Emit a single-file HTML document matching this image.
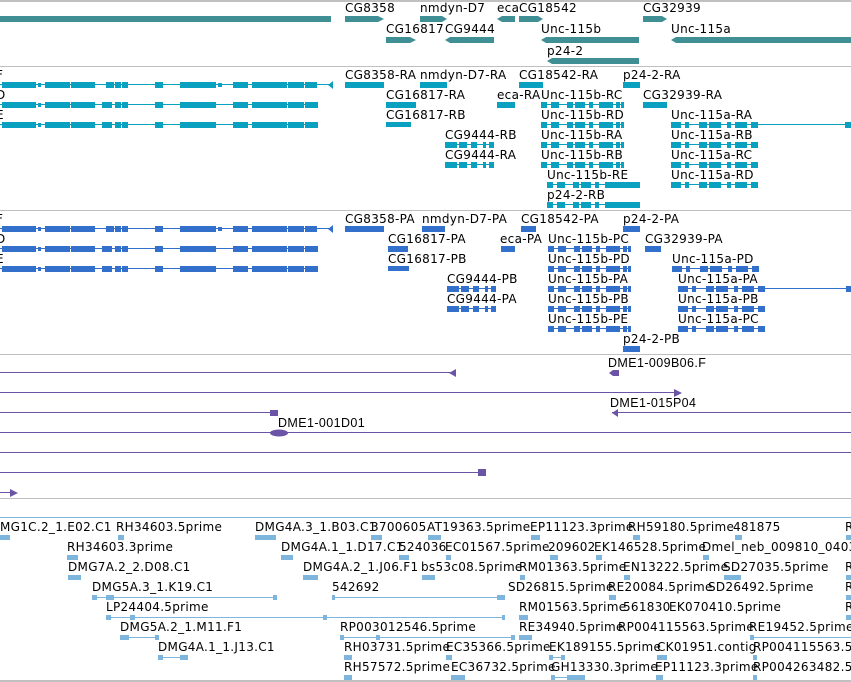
<!DOCTYPE html>
<html><head><meta charset="utf-8"><style>
html,body{margin:0;padding:0;background:#fff;width:851px;height:682px;overflow:hidden}
svg{display:block}
rect{shape-rendering:crispEdges}
text{font-family:"DejaVu Sans","Liberation Sans",sans-serif;font-size:12px;letter-spacing:0.3px;fill:#000}
.s text{font-family:"Liberation Sans","DejaVu Sans",sans-serif;font-size:12.5px;letter-spacing:0.4px}
</style></head><body>
<svg width="851" height="682" viewBox="0 0 851 682" xmlns="http://www.w3.org/2000/svg">
<defs>
<g id="lF"><rect x="0" y="-1" width="332" height="1"/>
<rect x="2" y="-3" width="34" height="6"/><rect x="38" y="-2" width="3" height="4"/><rect x="45" y="-3" width="25" height="6"/><rect x="71" y="-3" width="24" height="6"/><rect x="106" y="-3" width="8" height="6"/><rect x="115" y="-3" width="6" height="6"/><rect x="122" y="-3" width="6" height="6"/><rect x="155" y="-3" width="8" height="6"/><rect x="180" y="-3" width="36" height="6"/><rect x="218" y="-2" width="4" height="4"/><rect x="233" y="-3" width="15" height="6"/><rect x="252" y="-3" width="35" height="6"/><rect x="288" y="-3" width="16" height="6"/><rect x="305" y="-3" width="12" height="6"/><polygon points="328,0 333,-4 333,4"/></g>
<g id="lD"><rect x="0" y="-1" width="318" height="1"/>
<rect x="2" y="-3" width="34" height="6"/><rect x="38" y="-2" width="3" height="4"/><rect x="45" y="-3" width="25" height="6"/><rect x="71" y="-3" width="24" height="6"/><rect x="102" y="-3" width="10" height="6"/><rect x="115" y="-3" width="6" height="6"/><rect x="122" y="-3" width="6" height="6"/><rect x="155" y="-3" width="8" height="6"/><rect x="180" y="-3" width="36" height="6"/><rect x="233" y="-3" width="15" height="6"/><rect x="252" y="-3" width="35" height="6"/><rect x="288" y="-3" width="16" height="6"/><rect x="305" y="-3" width="13" height="6"/></g>
<g id="ub"><rect x="0" y="-1" width="83" height="1"/><rect x="0" y="-3" width="6" height="6"/><rect x="10" y="-3" width="8" height="6"/><rect x="26" y="-3" width="6" height="6"/><rect x="34" y="-3" width="10" height="6"/><rect x="48" y="-3" width="4" height="6"/><rect x="58" y="-3" width="14" height="6"/><rect x="75" y="-3" width="4" height="6"/><rect x="80" y="-3" width="3" height="6"/></g>
<g id="ua"><rect x="0" y="-1" width="87" height="1"/><rect x="0" y="-3" width="10" height="6"/><rect x="14" y="-3" width="4" height="6"/><rect x="28" y="-3" width="8" height="6"/><rect x="38" y="-3" width="12" height="6"/><rect x="56" y="-3" width="4" height="6"/><rect x="64" y="-3" width="12" height="6"/><rect x="80" y="-3" width="7" height="6"/></g>
<g id="c9"><rect x="0" y="-1" width="49" height="1"/><rect x="0" y="-3" width="12" height="6"/><rect x="14" y="-3" width="8" height="6"/><rect x="26" y="-3" width="6" height="6"/><rect x="38" y="-3" width="3" height="6"/><rect x="44" y="-3" width="5" height="6"/></g>
</defs>
<g fill="#c0c0c0"><rect x="0" y="0" width="851" height="2"/><rect x="0" y="66" width="851" height="1"/><rect x="0" y="210" width="851" height="1"/><rect x="0" y="354" width="851" height="1"/><rect x="0" y="498" width="851" height="1"/><rect x="0" y="680" width="851" height="2"/></g>

<g fill="#3f8f94">
<rect x="0" y="16" width="331" height="6"/>
<polygon points="345,16 378,16 384,19 378,22 345,22"/>
<polygon points="420,16 442,16 447,19 442,22 420,22"/>
<polygon points="497,19 502,16 515,16 515,22 502,22"/>
<polygon points="519,16 538,16 543,19 538,22 519,22"/>
<polygon points="643,16 662,16 667,19 662,22 643,22"/>
<polygon points="386,37 410,37 416,40 410,43 386,43"/>
<polygon points="445,40 450,37 494,37 494,43 450,43"/>
<polygon points="541,40 546,37 639,37 639,43 546,43"/>
<polygon points="671,40 676,37 851,37 851,43 676,43"/>
<polygon points="547,61 552,58 639,58 639,64 552,64"/>
</g>
<text x="345" y="12">CG8358</text><text x="420" y="12">nmdyn-D7</text><text x="497" y="12">eca</text><text x="519" y="12">CG18542</text><text x="643" y="12">CG32939</text>
<text x="386" y="33">CG16817</text><text x="445" y="33">CG9444</text><text x="541" y="33">Unc-115b</text><text x="671" y="33">Unc-115a</text>
<text x="547" y="55">p24-2</text>

<g fill="#0aa0c0">
<use href="#lF" transform="translate(0,85)"/><use href="#lD" transform="translate(0,105)"/><use href="#lD" transform="translate(0,125)"/>
<rect x="345" y="82" width="39" height="6"/><rect x="420" y="82" width="27" height="6"/><rect x="519" y="82" width="24" height="6"/><rect x="623" y="82" width="17" height="6"/>
<rect x="386" y="102" width="30" height="6"/><rect x="497" y="102" width="18" height="6"/><use href="#ub" transform="translate(541,105)"/><rect x="643" y="102" width="24" height="6"/>
<rect x="386" y="122" width="25" height="5"/><use href="#ub" transform="translate(541,125)"/><use href="#ua" transform="translate(671,125)"/><rect x="671" y="124" width="180" height="1"/><rect x="845" y="122" width="6" height="6"/>
<use href="#c9" transform="translate(445,145)"/><use href="#ub" transform="translate(541,145)"/><use href="#ua" transform="translate(671,145)"/>
<use href="#c9" transform="translate(445,165)"/><use href="#ub" transform="translate(541,165)"/><use href="#ua" transform="translate(671,165)"/>
<use href="#ub" transform="translate(547,185)"/><rect x="615" y="182" width="25" height="6"/><use href="#ua" transform="translate(671,185)"/>
<use href="#ub" transform="translate(547,205)"/><rect x="610" y="202" width="30" height="6"/>
</g>
<text x="-4" y="79">F</text><text x="-4" y="99">D</text><text x="-4" y="119">E</text>
<text x="345" y="79">CG8358-RA</text><text x="420" y="79">nmdyn-D7-RA</text><text x="519" y="79">CG18542-RA</text><text x="623" y="79">p24-2-RA</text>
<text x="386" y="99">CG16817-RA</text><text x="497" y="99">eca-RA</text><text x="541" y="99">Unc-115b-RC</text><text x="643" y="99">CG32939-RA</text>
<text x="386" y="119">CG16817-RB</text><text x="541" y="119">Unc-115b-RD</text><text x="671" y="119">Unc-115a-RA</text>
<text x="445" y="139">CG9444-RB</text><text x="541" y="139">Unc-115b-RA</text><text x="671" y="139">Unc-115a-RB</text>
<text x="445" y="159">CG9444-RA</text><text x="541" y="159">Unc-115b-RB</text><text x="671" y="159">Unc-115a-RC</text>
<text x="547" y="179">Unc-115b-RE</text><text x="671" y="179">Unc-115a-RD</text>
<text x="547" y="199">p24-2-RB</text>

<g fill="#3370cc">
<use href="#lF" transform="translate(0,229)"/><use href="#lD" transform="translate(0,249)"/><use href="#lD" transform="translate(0,269)"/>
<rect x="345" y="226" width="39" height="6"/><rect x="422" y="226" width="23" height="6"/><rect x="521" y="226" width="15" height="6"/><rect x="623" y="226" width="17" height="6"/>
<rect x="388" y="246" width="20" height="6"/><rect x="501" y="246" width="14" height="6"/><use href="#ub" transform="translate(548,249)"/><rect x="645" y="246" width="16" height="6"/>
<rect x="388" y="266" width="21" height="5"/><use href="#ub" transform="translate(548,269)"/><use href="#ua" transform="translate(672,269)"/>
<use href="#c9" transform="translate(447,289)"/><use href="#ub" transform="translate(548,289)"/><use href="#ua" transform="translate(678,289)"/><rect x="678" y="288" width="173" height="1"/><rect x="846" y="286" width="5" height="6"/>
<use href="#c9" transform="translate(447,309)"/><use href="#ub" transform="translate(548,309)"/><use href="#ua" transform="translate(678,309)"/>
<use href="#ub" transform="translate(548,329)"/><use href="#ua" transform="translate(678,329)"/>
<rect x="623" y="346" width="17" height="6"/>
</g>
<text x="-4" y="223">F</text><text x="-4" y="243">D</text><text x="-4" y="263">E</text>
<text x="345" y="223">CG8358-PA</text><text x="422" y="223">nmdyn-D7-PA</text><text x="521" y="223">CG18542-PA</text><text x="623" y="223">p24-2-PA</text>
<text x="388" y="243">CG16817-PA</text><text x="500" y="243">eca-PA</text><text x="548" y="243">Unc-115b-PC</text><text x="645" y="243">CG32939-PA</text>
<text x="388" y="263">CG16817-PB</text><text x="548" y="263">Unc-115b-PD</text><text x="672" y="263">Unc-115a-PD</text>
<text x="447" y="283">CG9444-PB</text><text x="548" y="283">Unc-115b-PA</text><text x="678" y="283">Unc-115a-PA</text>
<text x="447" y="303">CG9444-PA</text><text x="548" y="303">Unc-115b-PB</text><text x="678" y="303">Unc-115a-PB</text>
<text x="548" y="323">Unc-115b-PE</text><text x="678" y="323">Unc-115a-PC</text>
<text x="623" y="343">p24-2-PB</text>

<g fill="#6b54a6">
<rect x="0" y="372" width="452" height="1"/><polygon points="449,373 456,369 456,377"/>
<polygon points="609,373 613,370 619,370 619,376 613,376"/>
<rect x="0" y="392" width="676" height="1"/><polygon points="674,389 682,393 674,397"/>
<rect x="0" y="412" width="272" height="1"/><rect x="270" y="410" width="8" height="6"/>
<rect x="612" y="412" width="239" height="1"/><polygon points="612,413 618,409 618,417"/>
<rect x="0" y="432" width="851" height="1"/><ellipse cx="279" cy="433" rx="9" ry="3.5"/>
<rect x="0" y="452" width="851" height="1"/>
<rect x="0" y="472" width="480" height="1"/><rect x="478" y="469" width="8" height="7"/>
<rect x="0" y="492" width="12" height="1"/><polygon points="10,489 18,493 10,497"/>
</g>
<g class="s"><text x="608" y="367">DME1-009B06.F</text><text x="610" y="407">DME1-015P04</text><text x="278" y="427">DME1-001D01</text></g>

<g fill="#7db5dc">
<rect x="0" y="517" width="851" height="1"/>
<rect x="0" y="535" width="10" height="5"/><rect x="118" y="535" width="6" height="5"/><rect x="255" y="535" width="21" height="5"/><rect x="371" y="535" width="11" height="5"/><rect x="428" y="535" width="13" height="5"/><rect x="531" y="535" width="9" height="5"/><rect x="633" y="535" width="7" height="5"/><rect x="735" y="535" width="7" height="5"/><rect x="846" y="535" width="5" height="5"/>
<rect x="67" y="555" width="11" height="5"/><rect x="281" y="555" width="12" height="5"/><rect x="399" y="555" width="10" height="5"/><rect x="446" y="555" width="5" height="5"/><rect x="550" y="555" width="8" height="5"/><rect x="596" y="555" width="6" height="5"/><rect x="703" y="555" width="6" height="5"/>
<rect x="68" y="575" width="13" height="5"/><rect x="303" y="575" width="15" height="5"/><rect x="422" y="575" width="13" height="5"/><rect x="520" y="575" width="5" height="5"/><rect x="624" y="575" width="6" height="5"/><rect x="724" y="575" width="17" height="5"/><rect x="846" y="575" width="5" height="5"/>
<rect x="92" y="597" width="185" height="1"/><rect x="92" y="595" width="5" height="5"/><rect x="106" y="595" width="8" height="5"/><rect x="273" y="595" width="4" height="5"/><rect x="332" y="597" width="173" height="1"/><rect x="332" y="595" width="3" height="5"/><rect x="497" y="595" width="8" height="5"/><rect x="609" y="595" width="7" height="5"/><rect x="846" y="595" width="5" height="5"/>
<rect x="106" y="617" width="399" height="1"/><rect x="106" y="615" width="5" height="5"/><rect x="130" y="615" width="5" height="5"/><rect x="323" y="615" width="4" height="5"/><rect x="502" y="615" width="3" height="5"/><rect x="519" y="615" width="9" height="5"/><rect x="846" y="615" width="5" height="5"/>
<rect x="120" y="637" width="39" height="1"/><rect x="120" y="635" width="9" height="5"/><rect x="155" y="635" width="4" height="5"/><rect x="340" y="637" width="175" height="1"/><rect x="340" y="635" width="4" height="5"/><rect x="376" y="635" width="4" height="5"/><rect x="511" y="635" width="4" height="5"/><rect x="519" y="635" width="13" height="5"/><rect x="750" y="637" width="101" height="1"/><rect x="750" y="635" width="4" height="5"/>
<rect x="158" y="657" width="30" height="1"/><rect x="158" y="655" width="5" height="5"/><rect x="180" y="655" width="8" height="5"/><rect x="344" y="655" width="8" height="5"/><rect x="446" y="655" width="6" height="5"/><rect x="549" y="657" width="16" height="1"/><rect x="549" y="655" width="4" height="5"/><rect x="561" y="655" width="4" height="5"/><rect x="657" y="655" width="10" height="5"/><rect x="753" y="655" width="4" height="5"/>
<rect x="344" y="675" width="8" height="5"/><rect x="451" y="675" width="14" height="5"/><rect x="551" y="677" width="34" height="1"/><rect x="551" y="675" width="4" height="5"/><rect x="567" y="675" width="18" height="5"/><rect x="656" y="675" width="7" height="5"/><rect x="753" y="675" width="4" height="5"/>
</g>
<text x="0" y="531">MG1C.2_1.E02.C1</text><text x="116" y="531">RH34603.5prime</text><text x="255" y="531">DMG4A.3_1.B03.C1</text><text x="371" y="531">3700605</text><text x="427" y="531">AT19363.5prime</text><text x="530" y="531">EP11123.3prime</text><text x="628" y="531">RH59180.5prime</text><text x="733" y="531">481875</text><text x="845" y="531">R</text>
<text x="67" y="551">RH34603.3prime</text><text x="281" y="551">DMG4A.1_1.D17.C1</text><text x="399" y="551">524036</text><text x="445" y="551">EC01567.5prime</text><text x="548" y="551">209602</text><text x="594" y="551">EK146528.5prime</text><text x="702" y="551">Dmel_neb_009810_0403</text>
<text x="68" y="571">DMG7A.2_2.D08.C1</text><text x="303" y="571">DMG4A.2_1.J06.F1</text><text x="421" y="571">bs53c08.5prime</text><text x="519" y="571">RM01363.5prime</text><text x="623" y="571">EN13222.5prime</text><text x="723" y="571">SD27035.5prime</text><text x="845" y="571">R</text>
<text x="92" y="591">DMG5A.3_1.K19.C1</text><text x="332" y="591">542692</text><text x="508" y="591">SD26815.5prime</text><text x="608" y="591">RE20084.5prime</text><text x="708" y="591">SD26492.5prime</text><text x="845" y="591">R</text>
<text x="106" y="611">LP24404.5prime</text><text x="519" y="611">RM01563.5prime</text><text x="623" y="611">561830</text><text x="669" y="611">EK070410.5prime</text><text x="845" y="611">R</text>
<text x="120" y="631">DMG5A.2_1.M11.F1</text><text x="340" y="631">RP003012546.5prime</text><text x="519" y="631">RE34940.5prime</text><text x="618" y="631">RP004115563.5prime</text><text x="749" y="631">RE19452.5prime</text>
<text x="158" y="651">DMG4A.1_1.J13.C1</text><text x="344" y="651">RH03731.5prime</text><text x="446" y="651">EC35366.5prime</text><text x="549" y="651">EK189155.5prime</text><text x="657" y="651">CK01951.contig</text><text x="753" y="651">RP004115563.5</text>
<text x="344" y="671">RH57572.5prime</text><text x="451" y="671">EC36732.5prime</text><text x="551" y="671">GH13330.3prime</text><text x="655" y="671">EP11123.3prime</text><text x="753" y="671">RP004263482.5</text>
</svg>
</body></html>
